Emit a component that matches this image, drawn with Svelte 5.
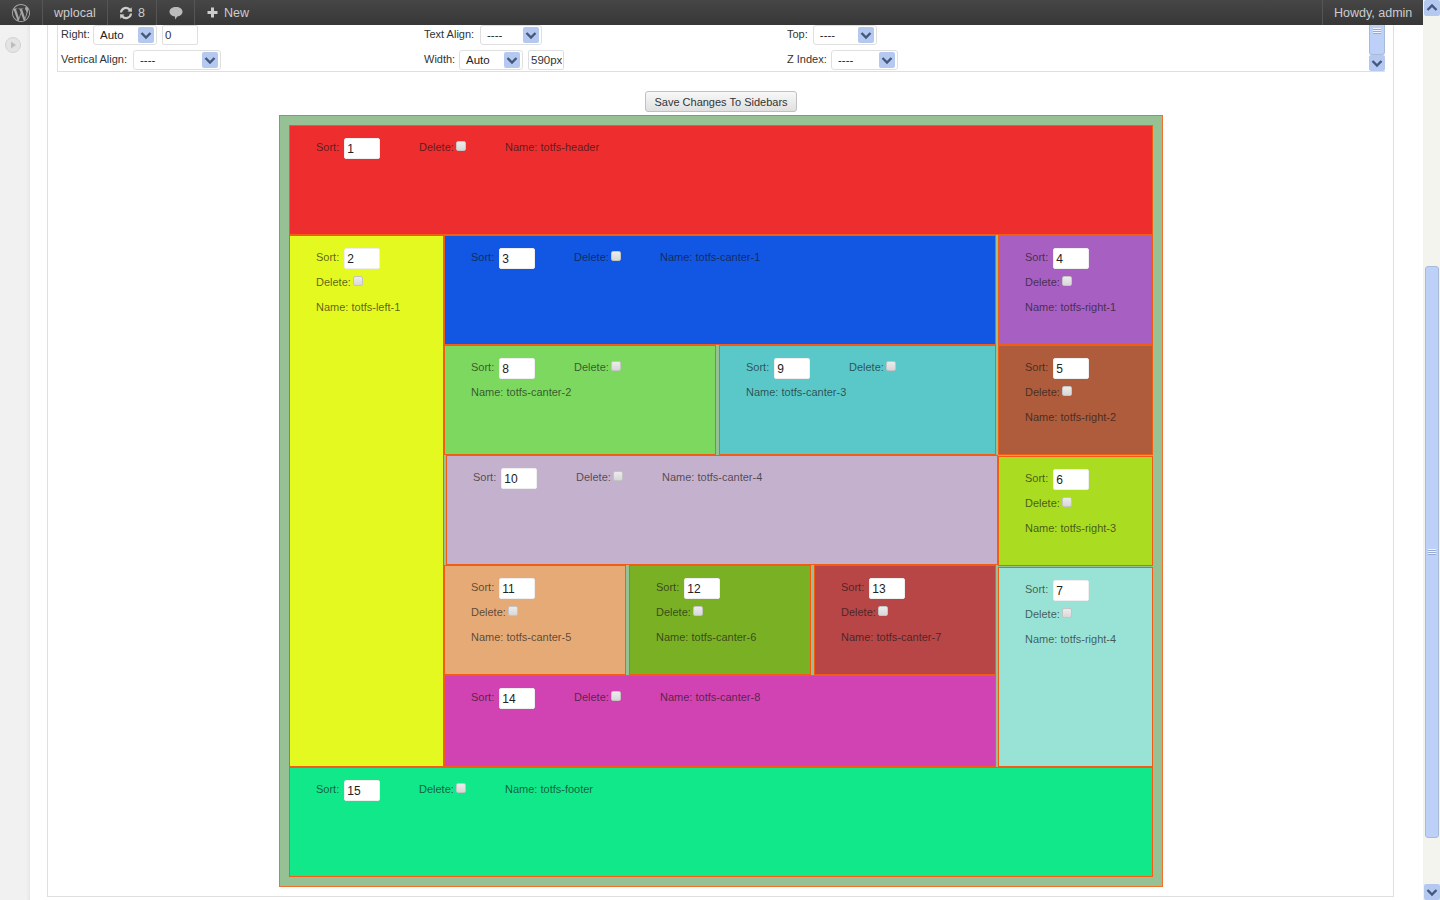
<script>
    const center = [
        { cls: 'row', items: [{ sort: 3, name: 'totfs-canter-1', color: '#1257e3', cls: 'full' }] },
        {
            cls: 'row',
            items: [
                { sort: 8, name: 'totfs-canter-2', color: '#7cd85f', cls: 'w272' },
                { sort: 9, name: 'totfs-canter-3', color: '#5ac8c9', cls: 'w277 gap3' },
            ],
        },
        { cls: 'row shifted', items: [{ sort: 10, name: 'totfs-canter-4', color: '#c4b1cd', cls: 'full' }] },
        {
            cls: 'row',
            items: [
                { sort: 11, name: 'totfs-canter-5', color: '#e6aa76', cls: 'w182' },
                { sort: 12, name: 'totfs-canter-6', color: '#7ab024', cls: 'w182 gap3' },
                { sort: 13, name: 'totfs-canter-7', color: '#b84647', cls: 'w182 gap3' },
            ],
        },
        { cls: 'row short', items: [{ sort: 14, name: 'totfs-canter-8', color: '#d143b2', cls: 'full' }] },
    ];

    const right = [
        { sort: 4, name: 'totfs-right-1', color: '#a75fc1', cls: '' },
        { sort: 5, name: 'totfs-right-2', color: '#ae5c3c', cls: '' },
        { sort: 6, name: 'totfs-right-3', color: '#aadc21', cls: 'push' },
        { sort: 7, name: 'totfs-right-4', color: '#99e3d6', cls: 'push tall' },
    ];

    const wpLogo =
        'M21.469 6.825c.84 1.537 1.318 3.3 1.318 5.175 0 3.979-2.156 7.456-5.363 9.325l3.295-9.527c.615-1.54.82-2.771.82-3.864 0-.405-.026-.78-.07-1.11m-7.981.105c.647-.03 1.232-.105 1.232-.105.582-.075.514-.93-.067-.899 0 0-1.755.135-2.88.135-1.064 0-2.85-.15-2.85-.15-.585-.03-.661.855-.075.885 0 0 .54.061 1.125.09l1.68 4.605-2.37 7.08L5.354 6.9c.649-.03 1.234-.1 1.234-.1.585-.075.516-.93-.065-.896 0 0-1.746.138-2.874.138-.2 0-.438-.008-.69-.015C4.911 3.15 8.235 1.215 12 1.215c2.809 0 5.365 1.072 7.286 2.833-.046-.003-.091-.009-.141-.009-1.06 0-1.812.923-1.812 1.914 0 .89.513 1.643 1.06 2.531.411.72.89 1.643.89 2.977 0 .915-.354 1.994-.821 3.479l-1.075 3.585-3.9-11.61.001.014zM12 22.784c-1.059 0-2.081-.153-3.048-.437l3.237-9.406 3.315 9.087c.024.053.05.101.078.149-1.12.393-2.325.609-3.582.609M1.211 12c0-1.564.336-3.05.935-4.39L7.29 21.709C3.694 19.96 1.212 16.271 1.211 12M12 0C5.385 0 0 5.385 0 12s5.385 12 12 12 12-5.385 12-12S18.615 0 12 0';
</script>

{#snippet chevron(up)}
    <svg class="chev" width="16" height="16" viewBox="0 0 16 16">
        <path d={up ? 'M3.5 10 L8 5.5 L12.5 10' : 'M3.5 6 L8 10.5 L12.5 6'} fill="none" stroke="#44587f" stroke-width="2.4" />
    </svg>
{/snippet}

{#snippet select(value, cls)}
    <div class="select {cls}">
        <span>{value}</span>
        {@render chevron(false)}
    </div>
{/snippet}

{#snippet block(b, cls)}
    <div class="block {cls}" style="background:{b.color}">
        <div class="field sort">
            <label for="sort-{b.sort}">Sort:</label>
            <input id="sort-{b.sort}" type="text" value={b.sort} />
        </div>
        <div class="field del">
            <label for="del-{b.sort}">Delete:</label>
            <input id="del-{b.sort}" type="checkbox" />
        </div>
        <div class="field">Name: {b.name}</div>
    </div>
{/snippet}

<div class="page">
    <div class="viewport">
        <header class="adminbar">
            <div class="bar-item logo">
                <svg width="18" height="18" viewBox="0 0 24 24"><path d={wpLogo} fill="#a6a6a6" /></svg>
            </div>
            <div class="bar-item site">wplocal</div>
            <div class="bar-item updates">
                <svg width="14" height="14" viewBox="0 0 14 14">
                    <path d="M2 6.5 A5 5 0 0 1 11 4" fill="none" stroke="#ccc" stroke-width="2.2" />
                    <path d="M8.5 5.4 L13 5.8 L12.6 1.2 Z" fill="#ccc" />
                    <path d="M12 7.5 A5 5 0 0 1 3 10" fill="none" stroke="#ccc" stroke-width="2.2" />
                    <path d="M5.5 8.6 L1 8.2 L1.4 12.8 Z" fill="#ccc" />
                </svg>
                <span>8</span>
            </div>
            <div class="bar-item comments">
                <svg width="14" height="14" viewBox="0 0 14 14">
                    <path d="M7 1 C10.8 1 13.5 2.9 13.5 5.8 C13.5 8.5 11 10.3 8.4 10.5 L6 13.5 L6 10.5 C3 10.3 .5 8.5 .5 5.8 C.5 2.9 3.2 1 7 1 Z" fill="#bbb" />
                </svg>
            </div>
            <div class="bar-item new">
                <svg width="11" height="11" viewBox="0 0 11 11"><path d="M5.5 0.5 V10.5 M0.5 5.5 H10.5" stroke="#ccc" stroke-width="3" /></svg>
                <span>New</span>
            </div>
            <div class="bar-item howdy">Howdy, admin</div>
        </header>

        <div class="body">
            <aside class="sidemenu">
                <svg width="16" height="16" viewBox="0 0 16 16">
                    <circle cx="8" cy="8" r="7.5" fill="#e4e4e4" stroke="#d2d2d2" />
                    <path d="M6 4.5 L11 8 L6 11.5 Z" fill="#bdbdbd" />
                </svg>
            </aside>

            <main class="content">
                <section class="panel">
                    <div class="options">
                        <div class="option-rows">
                            <div class="option-row">
                                <div class="option">
                                    <span class="opt-label l27">Right:</span>
                                    {@render select('Auto', 'w64')}
                                    <input class="opt-input w36" type="text" value="0" />
                                </div>
                                <div class="option">
                                    <span class="opt-label l51">Text Align:</span>
                                    {@render select('----', 'w62')}
                                </div>
                                <div class="option">
                                    <span class="opt-label">Top:</span>
                                    {@render select('----', 'w64')}
                                </div>
                            </div>
                            <div class="option-row">
                                <div class="option">
                                    <span class="opt-label l67">Vertical Align:</span>
                                    {@render select('----', 'w88')}
                                </div>
                                <div class="option">
                                    <span class="opt-label l30">Width:</span>
                                    {@render select('Auto', 'w64')}
                                    <input class="opt-input w36" type="text" value="590px" />
                                </div>
                                <div class="option">
                                    <span class="opt-label l39">Z Index:</span>
                                    {@render select('----', 'w67')}
                                </div>
                            </div>
                        </div>
                        <div class="inner-scroll">
                            <div class="inner-thumb">
                                <div class="grip"></div>
                            </div>
                            <div class="scroll-btn">{@render chevron(false)}</div>
                        </div>
                    </div>

                    <div class="save-wrap">
                        <button class="save" type="button">Save Changes To Sidebars</button>
                    </div>

                    <div class="canvas">
                        {@render block({ sort: 1, name: 'totfs-header', color: '#ee2d2f' }, 'wide')}
                        <div class="middle">
                            {@render block({ sort: 2, name: 'totfs-left-1', color: '#e4f920' }, 'left')}
                            <div class="center">
                                {#each center as row}
                                    <div class={row.cls}>
                                        {#each row.items as item}
                                            {@render block(item, item.cls)}
                                        {/each}
                                    </div>
                                {/each}
                            </div>
                            <div class="right">
                                {#each right as item}
                                    {@render block(item, item.cls)}
                                {/each}
                            </div>
                        </div>
                        {@render block({ sort: 15, name: 'totfs-footer', color: '#10e88a' }, 'wide')}
                    </div>
                </section>
            </main>
        </div>
    </div>

    <div class="page-scroll">
        <div class="scroll-btn large">{@render chevron(true)}</div>
        <div class="track">
            <div class="page-thumb">
                <div class="grip"></div>
            </div>
        </div>
        <div class="scroll-btn large">{@render chevron(false)}</div>
    </div>
</div>

<style>
    :global(body) {
        margin: 0;
        overflow: hidden;
        background: #fff;
    }

    .page {
        display: flex;
        width: 1440px;
        height: 900px;
        overflow: hidden;
        font-family: 'Liberation Sans', Arial, sans-serif;
        font-size: 11px;
        color: #333;
    }

    .viewport {
        width: 1423px;
        display: flex;
        flex-direction: column;
    }

    /* admin bar */
    .adminbar {
        height: 25px;
        flex: none;
        display: flex;
        background: linear-gradient(#464646, #373737);
        color: #ccc;
        font-size: 12.5px;
    }

    .bar-item {
        display: flex;
        align-items: center;
        gap: 5px;
        box-sizing: border-box;
        border-right: 1px solid #555;
    }

    .logo {
        width: 43px;
        padding-left: 12px;
    }

    .site {
        width: 65px;
        padding-left: 11px;
    }

    .updates {
        width: 49px;
        padding-left: 11px;
    }

    .comments {
        width: 38px;
        padding-left: 12px;
    }

    .new {
        padding-left: 12px;
        gap: 6px;
        border-right: none;
    }

    .howdy {
        margin-left: auto;
        width: 101px;
        padding-left: 11px;
        border-right: none;
        border-left: 1px solid #555;
    }

    .body {
        flex: 1;
        display: flex;
        min-height: 0;
    }

    .sidemenu {
        width: 30px;
        flex: none;
        box-sizing: border-box;
        padding: 12px 0 0 5px;
        background: linear-gradient(to right, #f1f1f1 26px, #e6e6e6);
    }

    .sidemenu svg {
        display: block;
    }

    .content {
        flex: 1;
        min-width: 0;
        padding: 0 29px 0 17px;
    }

    .panel {
        border: 1px solid #dfdfdf;
        border-top: none;
        padding: 0 8px 9px 9px;
    }

    /* style options */
    .options {
        display: flex;
        height: 47px;
        box-sizing: border-box;
        border-left: 1px solid #dfdfdf;
        border-bottom: 1px solid #dfdfdf;
    }

    .option-rows {
        flex: 1;
        padding-left: 3px;
        display: flex;
        flex-direction: column;
        gap: 5px;
    }

    .option-row {
        display: grid;
        grid-template-columns: repeat(3, 363px);
        height: 20px;
    }

    .option {
        display: flex;
        align-items: center;
        gap: 5px;
    }

    .opt-label {
        position: relative;
        top: -1px;
        white-space: nowrap;
    }

    .l27 {
        width: 27px;
    }

    .l30 {
        width: 30px;
    }

    .l39 {
        width: 39px;
    }

    .l51 {
        width: 51px;
    }

    .l67 {
        width: 67px;
    }

    .select {
        box-sizing: border-box;
        height: 20px;
        display: flex;
        align-items: center;
        justify-content: space-between;
        padding: 0 2px 0 6px;
        border: 1px solid #dfdfdf;
        border-radius: 3px;
        background: #fff;
        color: #222;
        font-size: 11.5px;
    }

    .w64 {
        width: 64px;
    }

    .w62 {
        width: 62px;
    }

    .w88 {
        width: 88px;
    }

    .w67 {
        width: 67px;
    }

    .chev {
        display: block;
        background: #b5c9f0;
        border-radius: 2px;
        flex: none;
    }

    .opt-input {
        box-sizing: border-box;
        height: 20px;
        padding: 0 1px 0 2px;
        margin: 0;
        border: 1px solid #dfdfdf;
        border-radius: 2px;
        font: inherit;
        font-size: 11.5px;
        color: #333;
    }

    .w36 {
        width: 36px;
    }

    .inner-scroll {
        width: 16px;
        flex: none;
        display: flex;
        flex-direction: column;
    }

    .inner-thumb {
        height: 30px;
        background: #bdd0f7;
        border: 1px solid #a9bad8;
        border-top: none;
        border-radius: 0 0 3px 3px;
        box-sizing: border-box;
        display: flex;
        justify-content: center;
        padding-top: 3px;
    }

    .grip {
        width: 8px;
        height: 6px;
        background: repeating-linear-gradient(#eef3ff 0 1px, #97aad3 1px 2px);
    }

    .scroll-btn {
        height: 16px;
        flex: none;
    }

    /* save */
    .save-wrap {
        display: flex;
        justify-content: center;
        padding: 19px 0 3px;
    }

    .save {
        box-sizing: border-box;
        width: 152px;
        height: 21px;
        padding: 0;
        border: 1px solid #c0c0c0;
        border-radius: 3px;
        background: linear-gradient(#f8f8f8, #e0e0e0);
        font: inherit;
        color: #333;
    }

    /* sidebars canvas */
    .canvas {
        box-sizing: border-box;
        width: 884px;
        margin-left: 222px;
        padding: 9px;
        border: 1px solid #f0702c;
        background: #95c195;
    }

    .middle {
        display: flex;
        height: 532px;
    }

    .center {
        width: 552px;
        flex: none;
    }

    .row {
        display: flex;
    }

    .shifted {
        margin-left: 2px;
        width: 552px;
    }

    .right {
        width: 155px;
        flex: none;
        margin-left: 2px;
    }

    .block {
        box-sizing: border-box;
        height: 110px;
        padding: 8px 0 0 26px;
        border: 1px solid #f25c14;
        display: flex;
        flex-wrap: wrap;
        align-content: flex-start;
        color: rgba(20, 20, 20, 0.68);
    }

    .wide {
        width: 864px;
    }

    .left {
        width: 155px;
        height: 532px;
        flex: none;
    }

    .full {
        width: 552px;
    }

    .w272 {
        width: 272px;
    }

    .w277 {
        width: 277px;
    }

    .w182 {
        width: 182px;
    }

    .gap3 {
        margin-left: 3px;
    }

    .short .block {
        height: 92px;
    }

    .push {
        margin-top: 1px;
    }

    .tall {
        height: 200px;
    }

    .field {
        height: 25px;
        display: flex;
        align-items: center;
        box-sizing: border-box;
    }

    .sort {
        width: 103px;
    }

    .del {
        width: 86px;
    }

    .sort input {
        box-sizing: border-box;
        width: 36px;
        height: 21px;
        margin: 4px 0 0 5px;
        padding: 1px 2px 0;
        border: 1px solid #eee;
        border-radius: 2px;
        background: #fff;
        font: inherit;
        font-size: 12px;
        color: #222;
    }

    .del input {
        appearance: none;
        box-sizing: border-box;
        width: 10px;
        height: 10px;
        margin: 0 0 2px 2px;
        border: 1px solid #c4c4c4;
        border-radius: 2px;
        background: linear-gradient(#ececec, #d8d8d8);
    }

    /* page scrollbar */
    .page-scroll {
        width: 17px;
        flex: none;
        display: flex;
        flex-direction: column;
        background: #f4f4ee;
    }

    .large {
        padding-left: 1px;
    }

    .track {
        flex: 1;
        padding: 250px 1px 0 2px;
    }

    .page-thumb {
        height: 572px;
        box-sizing: border-box;
        background: #bdd0f7;
        border: 1px solid #a9bad8;
        border-radius: 3px;
        display: flex;
        justify-content: center;
        align-items: center;
    }
</style>
